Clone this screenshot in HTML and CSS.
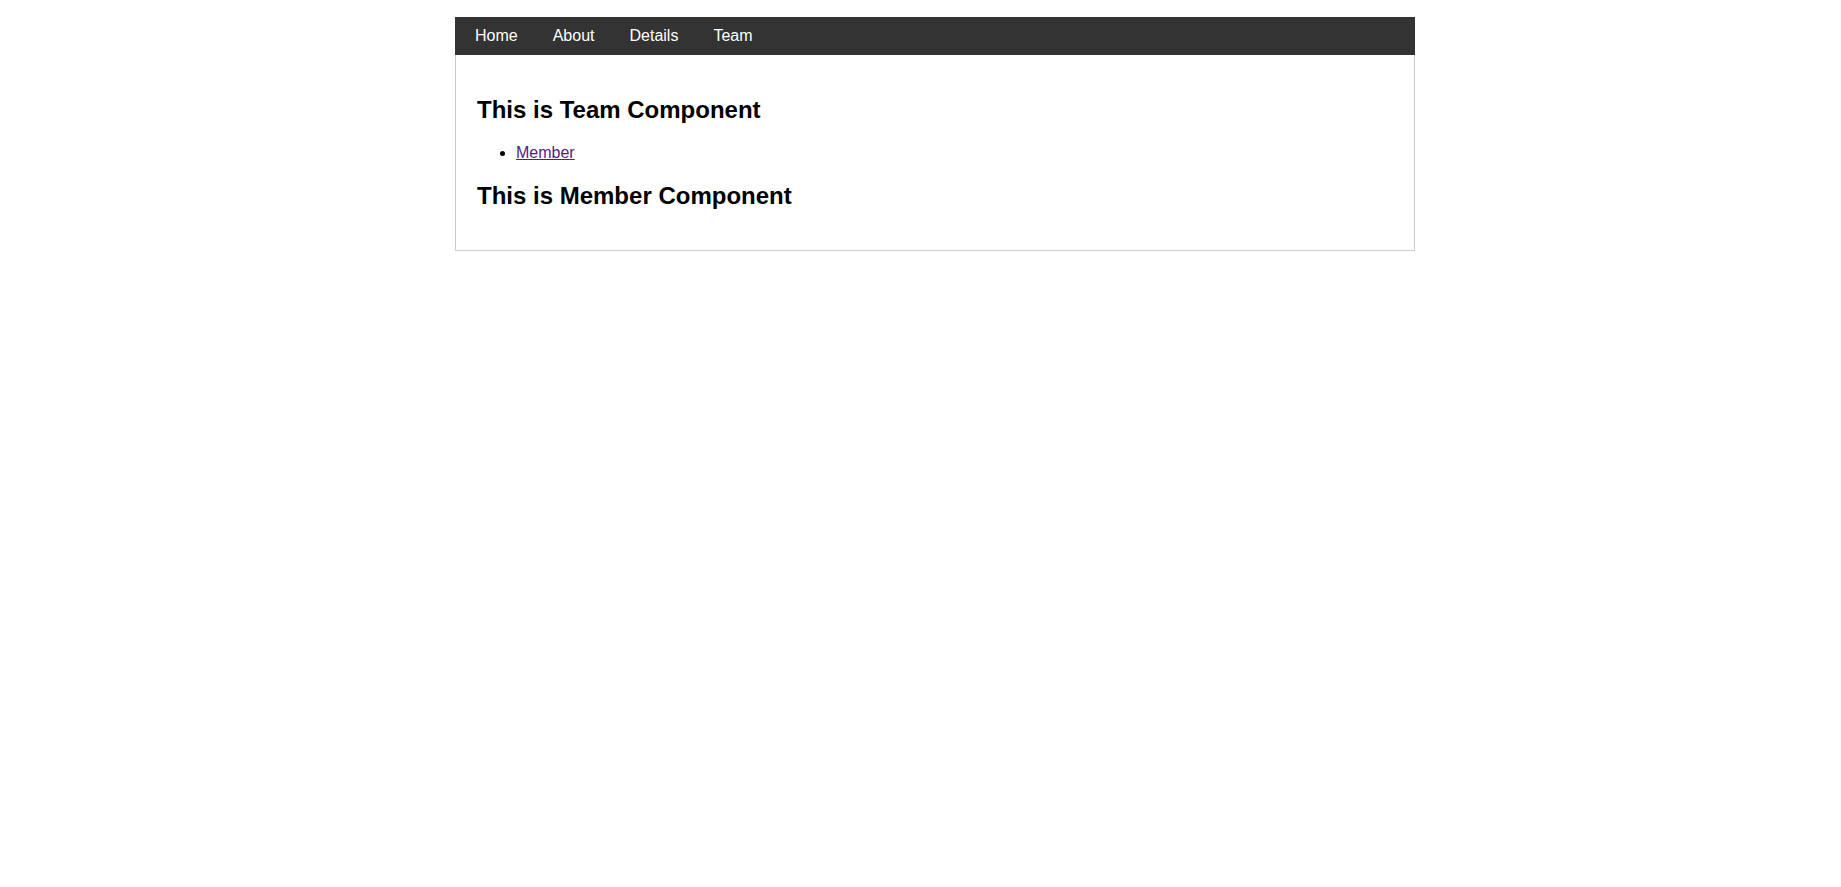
FILE: index.html
```html
<!DOCTYPE html>
<html>
<head>
<meta charset="utf-8">
<title>Team</title>
<link rel="stylesheet" href="styles.css">
</head>
<body>
<div class="app">
  <nav class="nav">
    <a class="nav-link" href="#">Home</a>
    <a class="nav-link" href="#">About</a>
    <a class="nav-link" href="#">Details</a>
    <a class="nav-link" href="#">Team</a>
  </nav>
  <main class="content">
    <h2 class="title">This is Team Component</h2>
    <ul class="list">
      <li><a class="member-link" href="#">Member</a></li>
    </ul>
    <h2 class="title">This is Member Component</h2>
  </main>
</div>
</body>
</html>
```
FILE: styles.css
```css
html, body {
  margin: 0;
  padding: 0;
  background: #fff;
}
body {
  font-family: "Liberation Sans", Arial, sans-serif;
  font-size: 16px;
  color: #000;
}
.app {
  width: 960px;
  margin: 17px 0 0 455px;
}
.nav {
  display: flex;
  gap: 35px;
  height: 38px;
  padding-left: 20px;
  background: #333;
  box-sizing: border-box;
}
.nav-link {
  color: #fff;
  text-decoration: none;
  line-height: 38px;
  font-size: 16px;
}
.content {
  border: 1px solid #ccc;
  border-top: none;
  padding: 21px 21px 20px;
}
.title {
  font-size: 24px;
  font-weight: bold;
  margin: 20px 0;
}
.list {
  margin: 16px 0;
  padding-left: 39px;
}
.member-link {
  color: #551a8b;
}
```
